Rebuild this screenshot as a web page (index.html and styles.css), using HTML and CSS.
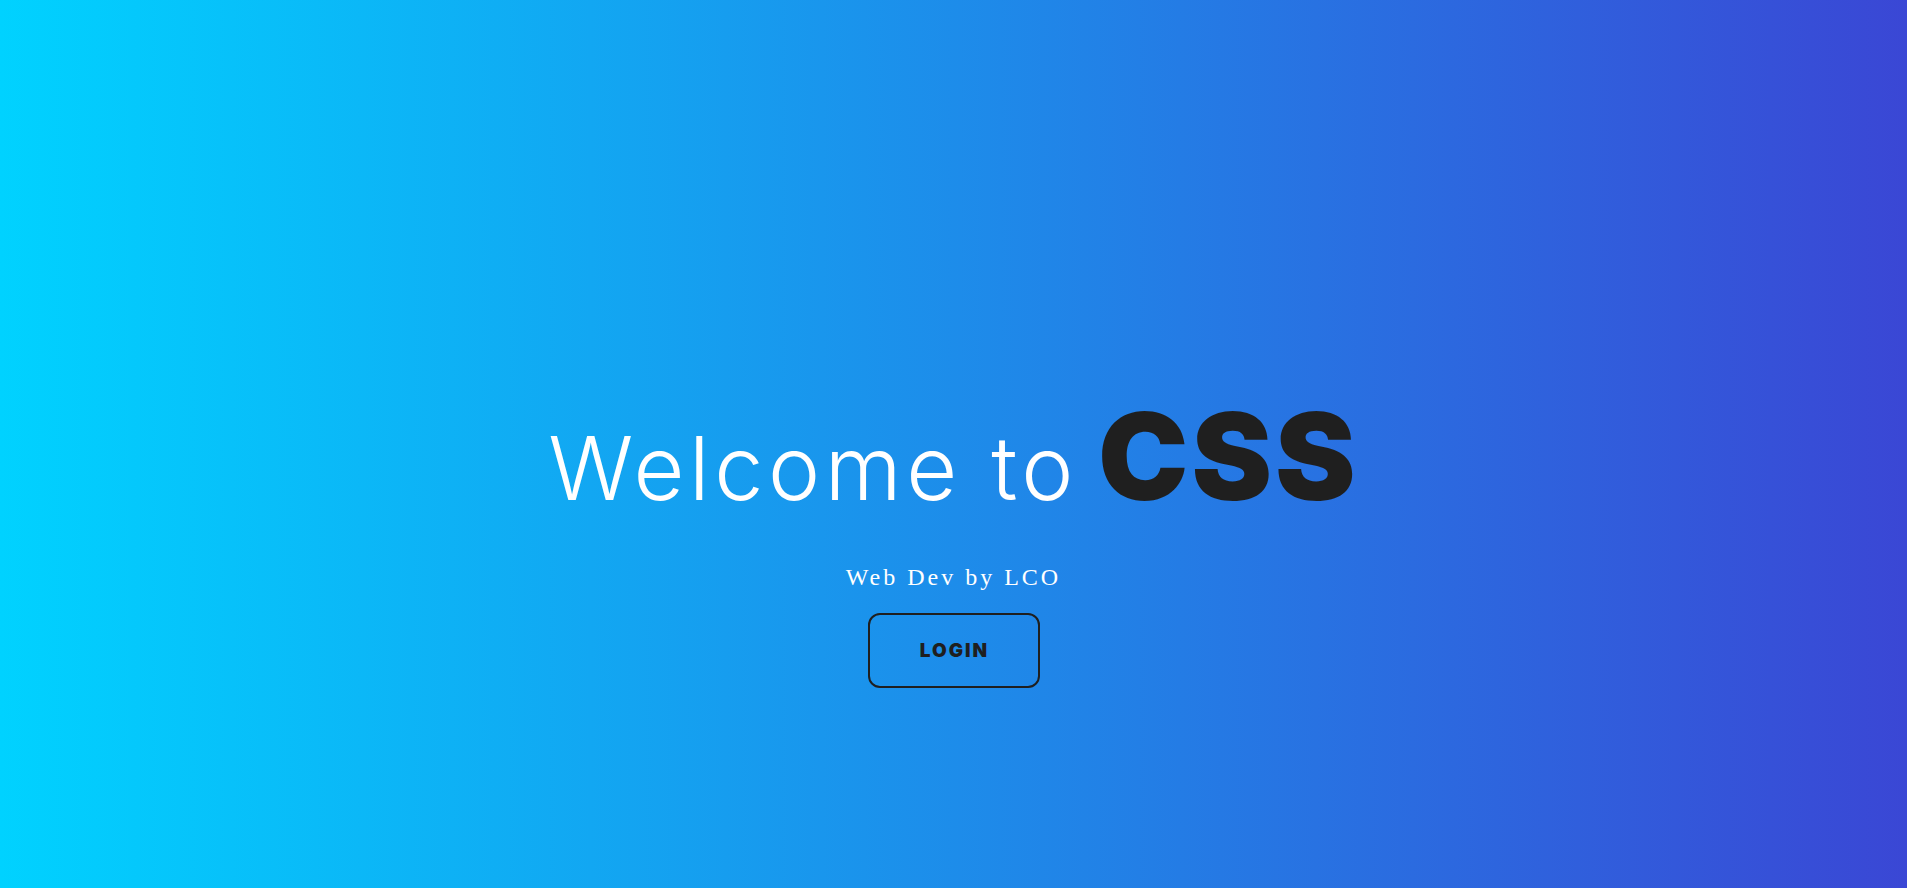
FILE: index.html
```html
<!DOCTYPE html>
<html lang="en">
<head>
<meta charset="UTF-8">
<title>Welcome to CSS</title>
<link rel="stylesheet" href="styles.css">
</head>
<body>
<main class="hero">
  <h1 class="title"><span class="title-light">Welcome to</span> <span class="title-strong">CSS</span></h1>
  <p class="subtitle">Web Dev by LCO</p>
  <a class="btn-login" href="#">LOGIN</a>
</main>
</body>
</html>
```
FILE: styles.css
```css
* { box-sizing: border-box; }
html, body { margin: 0; padding: 0; height: 100%; }
body {
  background: linear-gradient(to right, #00d2ff, #3a47d5);
  overflow: hidden;
}
.hero {
  height: 100vh;
  display: flex;
  flex-direction: column;
  align-items: center;
  padding-top: 396px;
}
.title {
  margin: 0;
  display: flex;
  align-items: baseline;
  gap: 20px;
  color: #ffffff;
  white-space: nowrap;
}
.title-light {
  font-family: Inter, "Noto Sans", sans-serif;
  font-weight: 300;
  font-size: 88px;
  line-height: 1;
  letter-spacing: 4.6px;
}
.title-strong {
  font-family: Inter, "Noto Sans", sans-serif;
  font-weight: 900;
  font-size: 121px;
  line-height: 1;
  letter-spacing: 3px;
  color: #1f1f1f;
}
.subtitle {
  margin: 47px 0 0;
  font-family: "Liberation Serif", "Times New Roman", serif;
  font-size: 24px;
  letter-spacing: 3px;
  color: #ffffff;
}
.btn-login {
  margin-top: 22px;
  width: 172px;
  height: 75px;
  display: flex;
  align-items: center;
  justify-content: center;
  border: 2px solid #1f1f1f;
  border-radius: 12px;
  font-family: Inter, "Noto Sans", sans-serif;
  font-weight: 900;
  font-size: 19px;
  letter-spacing: 2px;
  padding-left: 2px;
  color: #1f1f1f;
  text-decoration: none;
}
```
